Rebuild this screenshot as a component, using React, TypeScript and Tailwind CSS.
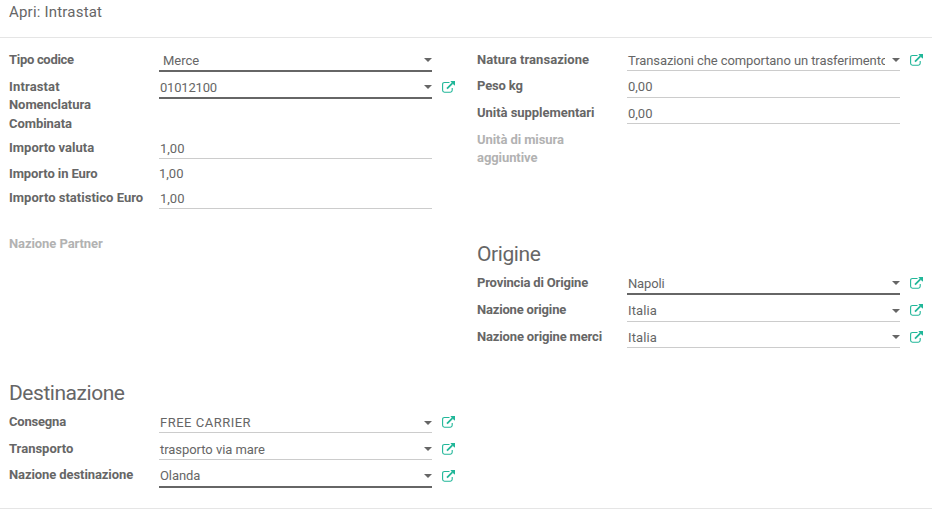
import type { ReactNode } from "react";

const BOLD = "h-[21px] border-b-2 border-[#666]";
const BOLD_TALL = "h-[22px] border-b-2 border-[#666]";
const THIN = "h-[20px] border-b border-[#ccc]";
const THIN_TALL = "h-[21px] border-b border-[#ccc]";

function LinkIcon({ low }: { low?: boolean }) {
  return (
    <svg className={`ml-[10px] h-[12px] w-[13px] shrink-0 ${low ? "mt-[4px]" : "mt-[3px]"}`} viewBox="0 0 13 12" fill="none">
      <path d="M7.500 1.500H2.500Q.6 1.500 .6 3.400V9.300Q.6 11.200 2.500 11.200H8.300Q10.200 11.200 10.200 9.300V7" stroke="#21b799" strokeWidth="1.100" />
      <path d="M5 7.600L10.500 2.100" stroke="#21b799" strokeWidth="1.700" />
      <path d="M8.400 0H13V4.800L11.500 3.600L9.600 1.600Z" fill="#21b799" />
    </svg>
  );
}

type RowProps = {
  label: ReactNode;
  value?: string;
  height: string;
  line?: string;
  caret?: "high" | "low";
  link?: boolean;
  lowLink?: boolean;
  muted?: boolean;
  indent?: string;
  labelClass?: string;
};

function Row({ label, value, height, line = "h-[20px]", caret, link, lowLink, muted, indent = "pl-px", labelClass = "" }: RowProps) {
  return (
    <div className={`flex items-start ${height}`}>
      <div className={`w-[150px] shrink-0 whitespace-nowrap font-bold leading-[18.4px] ${muted ? "text-[#b2b2b2]" : ""} ${labelClass}`}>{label}</div>
      {value && (
        <div className={`flex w-[273px] shrink-0 items-start ${line}`}>
          <div className={`w-[258px] overflow-hidden whitespace-nowrap pt-px leading-[18px] ${indent}`}>{value}</div>
          {caret && (
            <svg className={`ml-[7px] h-[4px] w-[8px] shrink-0 fill-[#666] ${caret === "high" ? "mt-[7px]" : "mt-[8px]"}`} viewBox="0 0 8 4">
              <path d="M0 0h8L4 4z" />
            </svg>
          )}
        </div>
      )}
      {link && <LinkIcon low={lowLink} />}
    </div>
  );
}

export default function App() {
  return (
    <div className="h-[509px] w-[932px] overflow-hidden bg-white font-['Roboto','Liberation_Sans',sans-serif] text-[13px] text-[#666]">
      <header className="h-[38px] border-b border-[#e5e5e5] pl-[9px] pt-[2px] text-[15px] leading-[20px] tracking-[0.2px]">Apri: Intrastat</header>
      <main className="flex h-[471px] border-b border-[#e5e5e5] pl-[9px] pt-[13px]">
        <section className="w-[468px] shrink-0">
          <Row label="Tipo codice" value="Merce" height="h-[27px]" line={BOLD} indent="pl-[4px]" caret="high" labelClass="tracking-[-0.3px]" />
          <Row label={<><span className="tracking-[0.15px]">Intrastat</span><br />Nomenclatura<br />Combinata</>} value="01012100" height="h-[61px]" line={BOLD} indent="pl-px tracking-[-0.2px]" caret="high" link labelClass="tracking-[-0.05px]" />
          <Row label="Importo valuta" value="1,00" height="h-[25px]" line={THIN} />
          <Row label="Importo in Euro" value="1,00" height="h-[25px]" indent="pl-0" labelClass="pt-px tracking-[-0.1px]" />
          <Row label="Importo statistico Euro" value="1,00" height="h-[46px]" line={THIN} labelClass="tracking-[0.02px]" />
          <Row label="Nazione Partner" height="h-[143px]" muted labelClass="tracking-[-0.08px]" />
          <h2 className="h-[35px] text-[21px] leading-[30px] tracking-[-0.46px]">Destinazione</h2>
          <Row label="Consegna" value="FREE CARRIER" height="h-[27px]" line={THIN} indent="pl-px tracking-[0.5px]" caret="low" link labelClass="tracking-[-0.2px]" />
          <Row label="Transporto" value="trasporto via mare" height="h-[26px]" line={THIN} indent="pl-px tracking-[-0.05px]" caret="high" link />
          <Row label="Nazione destinazione" value="Olanda" height="h-[27px]" line={BOLD_TALL} indent="pl-px tracking-[-0.1px]" caret="low" link lowLink labelClass="tracking-[-0.09px]" />
        </section>
        <section className="w-[455px] shrink-0">
          <Row label="Natura transazione" value="Transazioni che comportano un trasferimento" height="h-[26px]" line={THIN} indent="pl-px tracking-[-0.09px]" caret="high" link labelClass="tracking-[0.06px]" />
          <Row label="Peso kg" value="0,00" height="h-[27px]" line={THIN_TALL} labelClass="tracking-[-0.15px]" />
          <Row label="Unità supplementari" value="0,00" height="h-[27px]" line={THIN} labelClass="tracking-[-0.04px]" />
          <Row label={<>Unità di misura<br />aggiuntive</>} height="h-[108px]" muted labelClass="tracking-[-0.08px]" />
          <h2 className="h-[35px] text-[21px] leading-[30px] tracking-[-0.4px]">Origine</h2>
          <Row label="Provincia di Origine" value="Napoli" height="h-[27px]" line={BOLD} indent="pl-px tracking-[-0.15px]" caret="high" link labelClass="tracking-[-0.16px]" />
          <Row label="Nazione origine" value="Italia" height="h-[27px]" line={THIN_TALL} indent="pl-px tracking-[0.1px]" caret="low" link labelClass="tracking-[-0.18px]" />
          <Row label="Nazione origine merci" value="Italia" height="h-[27px]" line={THIN} indent="pl-px tracking-[0.1px]" caret="high" link labelClass="tracking-[-0.15px]" />
        </section>
      </main>
    </div>
  );
}
